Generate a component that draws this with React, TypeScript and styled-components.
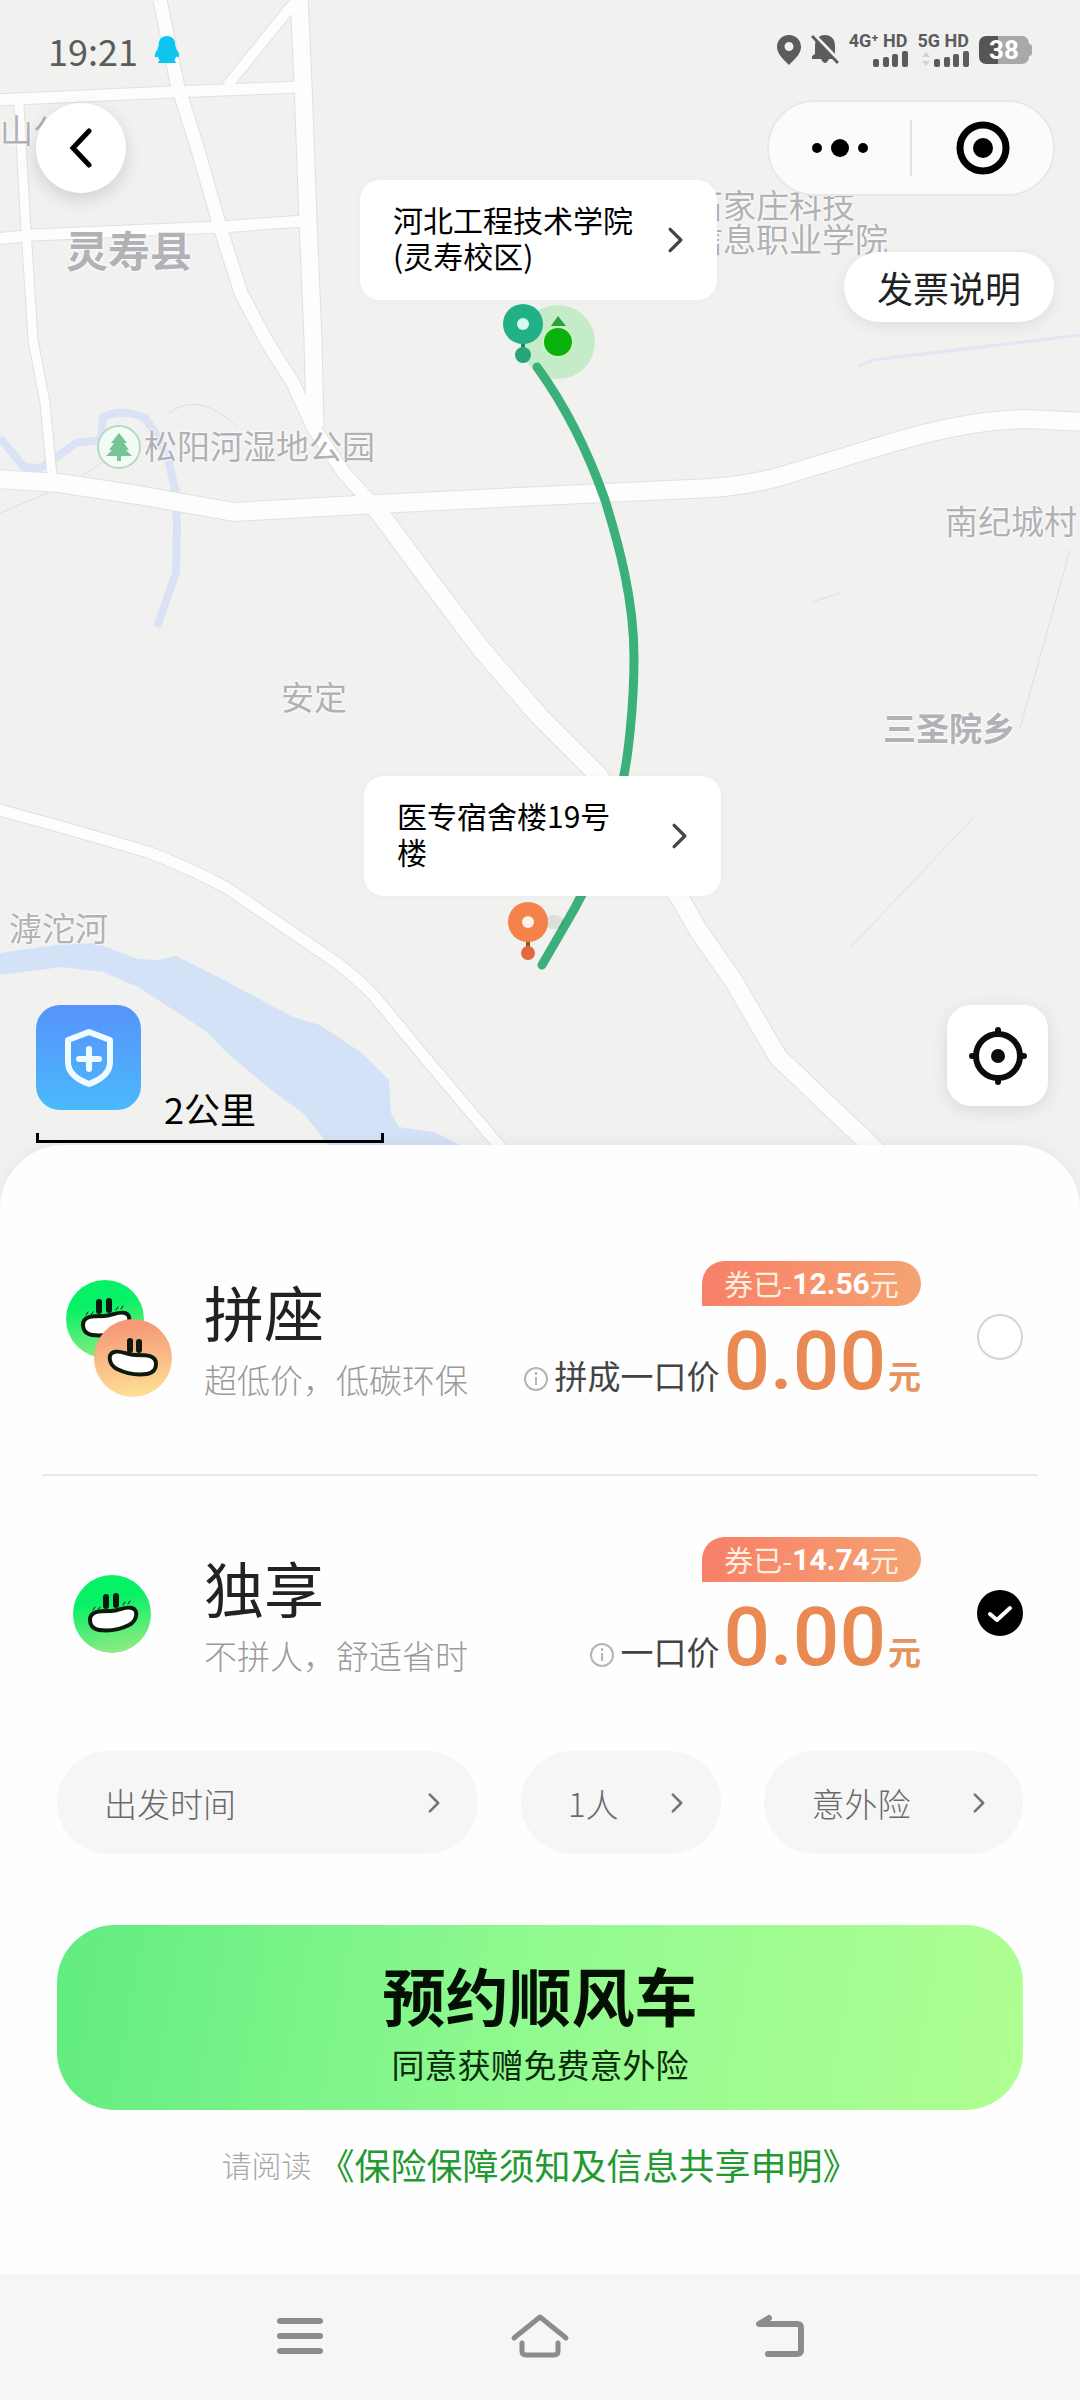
import React, { useState } from "react";
import styled, { createGlobalStyle, css } from "styled-components";

const sans = `"Noto Sans CJK SC", "Noto Sans", sans-serif`;
const digits = `"Roboto", sans-serif`;

const GlobalStyle = createGlobalStyle`
  *, *::before, *::after { box-sizing: border-box; }
  body { margin: 0; background: #f6f6f6; font-family: ${sans}; color: #222; }
  button { font: inherit; color: inherit; border: 0; padding: 0; cursor: pointer; }
  svg { display: block; }
`;

const Page = styled.div`
  display: flex;
  flex-direction: column;
  min-height: 100vh;
  overflow: hidden;
`;

/* ---------- map ---------- */

const MapArea = styled.section`
  position: relative;
  display: flex;
  flex-direction: column;
  height: 1210px;
  background: #f1f1f0;
`;

const MapCanvas = styled.svg`
  position: absolute;
  top: 0;
  left: 0;
`;

const MapLabel = styled.span<{ $x: number; $y: number; $kind?: "county" | "town" }>`
  position: absolute;
  left: ${(p) => p.$x}px;
  top: ${(p) => p.$y}px;
  font-size: 33px;
  line-height: 34px;
  white-space: pre;
  color: #b1b1b6;
  text-shadow: 0 0 3px #fff, 0 0 3px #fff;
  ${(p) => p.$kind === "town" && css`font-weight: 700;`}
  ${(p) => p.$kind === "county" && css`font-size: 42px; line-height: 44px; font-weight: 700;`}
`;

const PlaceCard = styled.button<{ $x: number; $y: number }>`
  position: absolute;
  left: ${(p) => p.$x}px;
  top: ${(p) => p.$y}px;
  display: flex;
  align-items: center;
  justify-content: space-between;
  width: 357px;
  height: 120px;
  padding: 0 34px 0 33px;
  border-radius: 20px;
  background: #fff;
  box-shadow: 0 0 8px rgba(0, 0, 0, 0.03);
  text-align: left;
`;

const PlaceName = styled.span`
  width: 240px;
  padding-bottom: 6px;
  font-size: 30px;
  line-height: 36px;
  color: #000;
`;

const StatusBar = styled.header`
  position: relative;
  display: flex;
  align-items: center;
  justify-content: space-between;
  height: 100px;
  padding: 0 48px;
  color: #5c5c5c;
`;

const StatusGroup = styled.div<{ $gap: number }>`
  display: flex;
  align-items: center;
  gap: ${(p) => p.$gap}px;
`;

const Clock = styled.time`
  font-size: 36px;
  line-height: 40px;
`;

const Signal = styled.div`
  display: flex;
  flex-direction: column;
  align-items: flex-end;
  gap: 2px;
  font: 700 18px/16px "Roboto", sans-serif;
`;

const Battery = styled.div`
  display: flex;
  align-items: center;
`;

const BatteryBody = styled.div`
  width: 50px;
  height: 28px;
  border-radius: 7px;
  background: linear-gradient(90deg, #555 38%, #a9a9a9 38%);
  color: #fff;
  font: 700 26px/28px "Roboto", sans-serif;
  text-align: center;
`;

const BatteryTip = styled.i`
  width: 3px;
  height: 12px;
  border-radius: 0 3px 3px 0;
  background: #a9a9a9;
`;

const TopBar = styled.nav`
  position: relative;
  display: flex;
  align-items: center;
  justify-content: space-between;
  padding: 0 25px 0 36px;
`;

const BackButton = styled.button`
  display: grid;
  place-items: center;
  width: 90px;
  height: 90px;
  border-radius: 50%;
  background: #fff;
  box-shadow: 0 6px 18px rgba(0, 0, 0, 0.14);
`;

const Capsule = styled.div`
  display: flex;
  align-items: center;
  width: 288px;
  height: 96px;
  border: 2px solid #e8e8e8;
  border-radius: 48px;
  background: #fbfbfb;
`;

const CapsuleButton = styled.button`
  display: grid;
  place-items: center;
  flex: 1;
  height: 56px;
  background: none;
  & + & { border-left: 2px solid #e0e0e0; }
`;

const InvoiceButton = styled.button`
  position: relative;
  align-self: flex-end;
  width: 210px;
  height: 70px;
  margin: 56px 26px 0 0;
  border-radius: 35px;
  background: #fff;
  box-shadow: 0 4px 16px rgba(0, 0, 0, 0.08);
  font-size: 36px;
  line-height: 70px;
`;

const MapFooter = styled.div`
  position: relative;
  display: flex;
  align-items: flex-start;
  justify-content: space-between;
  margin-top: auto;
  padding: 0 32px 67px 36px;
`;

const ToolButton = styled.button<{ $accent?: boolean }>`
  display: grid;
  place-items: center;
  width: ${(p) => (p.$accent ? 105 : 101)}px;
  height: ${(p) => (p.$accent ? 105 : 101)}px;
  border-radius: 24px;
  background: ${(p) => (p.$accent ? "linear-gradient(#5693fb, #4bb9fc)" : "#fff")};
  box-shadow: ${(p) => (p.$accent ? "none" : "0 4px 18px rgba(0, 0, 0, 0.1)")};
`;

const Scale = styled.div`
  width: 348px;
  margin-top: -20px;
  font-size: 36px;
  line-height: 36px;
  text-align: center;
  color: #000;
  &::after {
    content: "";
    display: block;
    height: 10px;
    margin-top: 7px;
    border: solid #000;
    border-width: 0 3px 3px;
  }
`;

/* ---------- order sheet ---------- */

const Sheet = styled.main`
  position: relative;
  display: flex;
  flex-direction: column;
  flex: 1;
  margin-top: -65px;
  padding-top: 54px;
  border-radius: 64px 64px 0 0;
  background: #fefefe;
  box-shadow: 0 -4px 18px rgba(0, 0, 0, 0.04);
`;

const Option = styled.label`
  display: flex;
  align-items: center;
  height: 276px;
  padding: 0 57px;
  cursor: pointer;
`;

const Avatar = styled.svg`
  flex: none;
  margin-right: 26px;
`;

const OptionText = styled.div`
  flex: 1;
  padding-top: 2px;
`;

const OptionTitle = styled.div`
  font-size: 60px;
  line-height: 68px;
  color: #222;
`;

const OptionNote = styled.div`
  margin-top: 14px;
  font-size: 33px;
  line-height: 40px;
  font-weight: 300;
  color: #9a9a9a;
`;

const PriceColumn = styled.div`
  display: flex;
  flex-direction: column;
  align-items: flex-end;
  margin-right: 56px;
  padding-bottom: 8px;
`;

const Coupon = styled.div`
  display: flex;
  align-items: center;
  justify-content: center;
  width: 219px;
  height: 45px;
  border-radius: 23px 23px 23px 0;
  background: linear-gradient(100deg, #f87f68, #f5a472);
  color: #ffeedd;
  font-size: 29px;
  line-height: 45px;
`;

const CouponAmount = styled.b`
  font: 700 30px/45px ${digits};
  color: #fff;
`;

const PriceLine = styled.div`
  display: flex;
  align-items: baseline;
  height: 88px;
  margin-top: 11px;
  line-height: 88px;
`;

const InfoMark = styled.span`
  align-self: center;
  padding-top: 36px;
`;

const PriceLabel = styled.span`
  margin: 0 4px 0 6px;
  font-size: 33px;
  color: #444;
`;

const Price = styled.strong`
  font: 500 82px/88px ${digits};
  color: #e98a52;
`;

const PriceUnit = styled.span`
  margin-left: 2px;
  font-size: 33px;
  font-weight: 700;
  color: #e5935f;
`;

const Radio = styled.span`
  position: relative;
  display: grid;
  flex: none;
  width: 46px;
  height: 46px;
  & > * { grid-area: 1 / 1; }
`;

const RadioInput = styled.input`
  appearance: none;
  width: 46px;
  height: 46px;
  margin: 0;
  border: 2px solid #d4d4d4;
  border-radius: 50%;
  background: #fff;
  &:checked { border-color: #000; background: #000; }
`;

const RadioTick = styled.svg`
  position: relative;
  pointer-events: none;
`;

const Divider = styled.hr`
  height: 2px;
  margin: -1px 42px;
  border: 0;
  background: #e8e8e8;
`;

const Filters = styled.div`
  display: grid;
  grid-template-columns: 420fr 200fr 258fr;
  gap: 43px;
  padding: 0 57px;
`;

const FilterButton = styled.button`
  display: flex;
  align-items: center;
  justify-content: space-between;
  height: 103px;
  padding: 0 38px 0 47px;
  border-radius: 52px;
  background: #f6f6f6;
  font-size: 33px;
  font-weight: 300;
  color: #6a6a6a;
`;

const BookButton = styled.button`
  display: flex;
  flex-direction: column;
  align-items: center;
  gap: 14px;
  margin: 71px 57px 0;
  padding: 33px 0 26px;
  border-radius: 58px;
  background: linear-gradient(100deg, #61ec80, #92fa90 50%, #b0ff92);
`;

const BookTitle = styled.span`
  font-size: 63px;
  line-height: 72px;
  font-weight: 700;
  color: #041004;
`;

const BookNote = styled.span`
  font-size: 33px;
  line-height: 40px;
  color: #0a2c0c;
`;

const Terms = styled.p`
  display: flex;
  align-items: center;
  justify-content: center;
  gap: 7px;
  margin: 30px 0 32px;
  font-size: 30px;
  line-height: 48px;
  font-weight: 300;
  color: #a8a8a8;
`;

const TermsLink = styled.a`
  font-size: 36px;
  font-weight: 400;
  color: #229a30;
  text-decoration: none;
`;

const SystemNav = styled.nav`
  position: relative;
  display: flex;
  justify-content: center;
  gap: 180px;
  height: 126px;
  padding-bottom: 2px;
  background: #f6f6f6;
`;

const SystemButton = styled.button`
  display: grid;
  place-items: center;
  width: 60px;
  background: none;
`;

/* ---------- drawings ---------- */

const roads: { d: string; w: number }[] = [
  { d: "M160 0 L177 83 L198 150 L220 227 L241 293 L267 342 L293 383 L313 427 L344 473 L375 507", w: 13 },
  { d: "M370 500 L427 577 L482 650 L540 717 L598 775 L681 900 L698 930 L733 980 L778 1057 L826 1103 L880 1154", w: 18 },
  { d: "M299 -4 L303 83 L308 220 L313 340 L315 427", w: 17 },
  { d: "M-4 100 L172 92 L300 87", w: 11 },
  { d: "M227 86 L294 3", w: 10 },
  { d: "M19 104 L26 230 L33 340 L45 403 L52 476", w: 9 },
  { d: "M-4 239 L34 235 L220 227 L303 221", w: 11 },
  { d: "M-4 479 L59 483 L138 495 L234 512 L358 505 L540 496 L712 488 Q760 484 795 472 L881 446 Q964 420 1025 419 L1084 422", w: 18 },
  { d: "M-4 809 L65 828 L148 852 Q190 868 227 888 L337 963 Q357 978 375 997 L427 1060 L506 1154", w: 11 },
];

const Bean = "M-21 8C-21-1-12-1 0-1C8-1 14-6 21-4C28-2 26 9 18 13C8 18-4 19-12 18C-19 17-21 12-21 8Z";

function MapDrawing() {
  return (
    <MapCanvas width="1080" height="1210" viewBox="0 0 1080 1210" fill="none" aria-hidden="true">
      <path
        d="M0 953L62 944L96 943L138 959L158 960L176 956L220 978L293 1017L320 1025L362 1053L389 1080L391 1113L399 1127L434 1132L470 1150H333L303 1113L275 1093L227 1053L207 1032L169 1007L138 987L103 972L62 967L0 975Z"
        fill="#d4e2f8"
      />
      <path d="M0 438L24 467L41 468L76 443L101 440L103 417Q124 408 145 418L158 437L169 463L176 493L177 527L176 573L157 627" stroke="#dbe2f6" strokeWidth="8" />
      <path d="M858 367L872 360L1040 340L1080 335" stroke="#e0e6f3" strokeWidth="3" />
      <path d="M1070 550L1020 728M974 817L850 948" stroke="#dcdeea" strokeWidth="1" />
      <path d="M812 602L840 593M169 413Q200 390 238 428M0 513L48 493M83 475L103 462" stroke="#dedee2" strokeWidth="1" />
      {roads.map((r) => (
        <path key={r.d} d={r.d} stroke="#e0e0e1" strokeWidth={r.w + 2} strokeLinejoin="round" />
      ))}
      {roads.map((r) => (
        <path key={r.d} d={r.d} stroke="#fdfdfd" strokeWidth={r.w} strokeLinejoin="round" />
      ))}
      <circle cx="119" cy="447" r="21" fill="#f2fcf5" stroke="#b5d9c4" strokeWidth="2" />
      <path d="M119 433L127 443H124L129 450H126L132 456H121V461H117V456H106L112 450H109L114 443H111Z" fill="#75c598" />

      <circle cx="558" cy="342" r="37" fill="#c5ecc8" />
      <path d="M551 326L558 316L566 326Z" fill="#2ea03c" />
      <circle cx="558" cy="342" r="15" fill="#09b30b" stroke="#c9f5c4" strokeWidth="2" />
      <path
        d="M537 367C561 400 585 443 605 500C619 545 634 600 634 657C634 707 628 755 624 775C614 830 592 880 564 927L542 965"
        stroke="#3bb07a"
        strokeWidth="9"
        strokeLinecap="round"
      />
      <path d="M523 340V355" stroke="#1b8d68" strokeWidth="4" />
      <circle cx="523" cy="324" r="20" fill="#22b087" />
      <circle cx="523" cy="324" r="6" fill="#d6fbee" />
      <circle cx="523" cy="355" r="8" fill="#25a57c" />
      <ellipse cx="554" cy="922" rx="10" ry="7" fill="#000" opacity=".08" />
      <path d="M528 940V953" stroke="#9c4d22" strokeWidth="4" />
      <circle cx="528" cy="922" r="20" fill="#f5824b" />
      <circle cx="528" cy="922" r="6" fill="#fff2e4" />
      <circle cx="528" cy="953" r="7" fill="#e3683b" />
    </MapCanvas>
  );
}

function Chevron({ size, color = "#444" }: { size: number; color?: string }) {
  return (
    <svg width={size / 2 + 2} height={size} viewBox="0 0 14 24" fill="none" stroke={color} strokeWidth="3" strokeLinecap="round" strokeLinejoin="round">
      <path d="M2 2L12 12L2 22" />
    </svg>
  );
}

function Bars({ data }: { data?: boolean }) {
  return (
    <svg width="48" height="16" viewBox="0 0 48 16" fill="#5c5c5c">
      {data && <path d="M1 6L5 1L9 6ZM1 10L5 15L9 10Z" fill="#d2d2d2" />}
      <rect x="13" y="8" width="6" height="8" rx="2" />
      <rect x="23" y="6" width="6" height="10" rx="2" />
      <rect x="32" y="3" width="6" height="13" rx="2" />
      <rect x="42" y="0" width="6" height="16" rx="2" />
    </svg>
  );
}

function Face({ x, y, warm }: { x: number; y: number; warm?: boolean }) {
  return (
    <g transform={`translate(${x} ${y})`} strokeLinecap="round">
      <circle r="39" fill={warm ? "url(#warm)" : "url(#fresh)"} />
      <g transform={warm ? "translate(2 -2) scale(-1 1)" : "translate(-1 -2)"} stroke="#0b1a0c">
        <path d={warm ? "M-4-14V-6M5-15V-6" : "M-5-15V-6M5-16V-7"} strokeWidth="6" />
        <path d={Bean} fill="#fff" strokeWidth="4" />
        {!warm && <path d="M-18-2L-16-5M-13-2L-11-5M12-7L14-10M17-8L19-11" strokeWidth="1" />}
      </g>
    </g>
  );
}

function Faces({ pair }: { pair?: boolean }) {
  return (
    <Avatar width="121" height="120" viewBox="0 0 121 120" aria-hidden="true">
      <defs>
        <linearGradient id="fresh" x1=".4" y1="0" x2=".6" y2="1">
          <stop offset=".3" stopColor="#06f165" />
          <stop offset="1" stopColor="#93ea84" />
        </linearGradient>
        <linearGradient id="warm" x1=".4" y1="0" x2=".5" y2="1">
          <stop offset=".1" stopColor="#f69a78" />
          <stop offset="1" stopColor="#fee094" />
        </linearGradient>
      </defs>
      {pair ? (
        <>
          <Face x={48} y={42} />
          <Face x={76} y={81} warm />
        </>
      ) : (
        <Face x={55} y={61} />
      )}
    </Avatar>
  );
}

function InfoIcon() {
  return (
    <svg width="24" height="24" viewBox="0 0 24 24" fill="none" stroke="#b5b5b5" strokeWidth="2">
      <circle cx="12" cy="12" r="11" />
      <path d="M12 10V18M12 5V8" />
    </svg>
  );
}

/* ---------- page ---------- */

const mapLabels: { text: string; x: number; y: number; kind?: "county" | "town" }[] = [
  { text: "山公", x: 0, y: 112 },
  { text: "灵寿县", x: 66, y: 227, kind: "county" },
  { text: "石家庄科技\n信息职业学院", x: 690, y: 187 },
  { text: "松阳河湿地公园", x: 144, y: 428 },
  { text: "南纪城村", x: 945, y: 503 },
  { text: "安定", x: 281, y: 679 },
  { text: "三圣院乡", x: 883, y: 710, kind: "town" },
  { text: "滹沱河", x: 9, y: 910 },
];

const options = [
  { id: "share", title: "拼座", note: "超低价，低碳环保", coupon: "12.56", label: "拼成一口价", price: "0.00" },
  { id: "solo", title: "独享", note: "不拼人，舒适省时", coupon: "14.74", label: "一口价", price: "0.00" },
];

export default function App() {
  const [selected, setSelected] = useState("solo");
  return (
    <Page>
      <GlobalStyle />
      <MapArea>
        <MapDrawing />
        {mapLabels.map((l) => (
          <MapLabel key={l.text} $x={l.x} $y={l.y} $kind={l.kind}>{l.text}</MapLabel>
        ))}
        <PlaceCard $x={360} $y={180}>
          <PlaceName>河北工程技术学院(灵寿校区)</PlaceName>
          <Chevron size={26} />
        </PlaceCard>
        <PlaceCard $x={364} $y={776}>
          <PlaceName>医专宿舍楼19号楼</PlaceName>
          <Chevron size={26} />
        </PlaceCard>

        <StatusBar>
          <StatusGroup $gap={16}>
            <Clock>19:21</Clock>
            <svg width="26" height="30" viewBox="0 0 28 30" fill="#10c4f0">
              <path d="M14 0C20 0 23 4 23 10L24 14C27 18 28 22 26 23L24 22L22 26L24 29H4L6 26L4 22L2 23C0 22 1 18 4 14L5 10C5 4 8 0 14 0Z" />
            </svg>
          </StatusGroup>
          <StatusGroup $gap={10}>
            <svg width="24" height="30" viewBox="0 0 24 30" fill="#5c5c5c">
              <path fillRule="evenodd" d="M12 0C19 0 24 5 24 12C24 19 17 25 12 30C7 25 0 19 0 12C0 5 5 0 12 0ZM12 7A4 4 0 1 0 12 16A4 4 0 1 0 12 7Z" />
            </svg>
            <svg width="28" height="32" viewBox="0 0 28 32">
              <path d="M14 1C21 1 24 6 24 12V20L27 25H18Q14 33 10 25H1V22L4 20V12C4 6 7 1 14 1Z" fill="#5c5c5c" />
              <path d="M3 1L29 28" stroke="#f1f1f0" strokeWidth="4" />
              <path d="M1 2L27 29" stroke="#5c5c5c" strokeWidth="3" />
            </svg>
            <Signal>
              <span>4G⁺ HD</span>
              <Bars />
            </Signal>
            <Signal>
              <span>5G HD</span>
              <Bars data />
            </Signal>
            <Battery>
              <BatteryBody>38</BatteryBody>
              <BatteryTip />
            </Battery>
          </StatusGroup>
        </StatusBar>

        <TopBar>
          <BackButton aria-label="返回">
            <svg width="24" height="40" viewBox="0 0 24 40" fill="none" stroke="#000" strokeWidth="5" strokeLinecap="round">
              <path d="M20 3L4 20L20 37" />
            </svg>
          </BackButton>
          <Capsule>
            <CapsuleButton aria-label="更多">
              <svg width="58" height="20" viewBox="0 0 58 20">
                <circle cx="6" cy="10" r="5" />
                <circle cx="29" cy="10" r="9" />
                <circle cx="52" cy="10" r="5" />
              </svg>
            </CapsuleButton>
            <CapsuleButton aria-label="关闭">
              <svg width="54" height="54" viewBox="0 0 54 54">
                <circle cx="27" cy="27" r="23" fill="none" stroke="#000" strokeWidth="7" />
                <circle cx="27" cy="27" r="10" />
              </svg>
            </CapsuleButton>
          </Capsule>
        </TopBar>
        <InvoiceButton>发票说明</InvoiceButton>

        <MapFooter>
          <div>
            <ToolButton $accent aria-label="安全中心">
              <svg width="50" height="60" viewBox="0 0 50 60" fill="none" stroke="#effcff" strokeWidth="6" strokeLinejoin="round" strokeLinecap="round">
                <path d="M25 4L46 12V34C46 46 36 52 25 56C14 52 4 46 4 34V12Z" />
                <path d="M25 21V41M15 31H35" />
              </svg>
            </ToolButton>
            <Scale>2公里</Scale>
          </div>
          <ToolButton aria-label="定位">
            <svg width="60" height="60" viewBox="0 0 60 60" fill="none" stroke="#0c0c0c" strokeWidth="6" strokeLinecap="round">
              <circle cx="30" cy="30" r="22" />
              <path d="M30 4V8M30 52V56M4 30H8M52 30H56" />
              <circle cx="30" cy="30" r="7" fill="#0c0c0c" stroke="none" />
            </svg>
          </ToolButton>
        </MapFooter>
      </MapArea>

      <Sheet>
        {options.map((o, i) => (
          <React.Fragment key={o.id}>
            {i > 0 && <Divider />}
            <Option htmlFor={o.id}>
              <Faces pair={o.id === "share"} />
              <OptionText>
                <OptionTitle>{o.title}</OptionTitle>
                <OptionNote>{o.note}</OptionNote>
              </OptionText>
              <PriceColumn>
                <Coupon>
                  券已-<CouponAmount>{o.coupon}</CouponAmount>元
                </Coupon>
                <PriceLine>
                  <InfoMark><InfoIcon /></InfoMark>
                  <PriceLabel>{o.label}</PriceLabel>
                  <Price>{o.price}</Price>
                  <PriceUnit>元</PriceUnit>
                </PriceLine>
              </PriceColumn>
              <Radio>
                <RadioInput id={o.id} type="radio" name="ride" checked={selected === o.id} onChange={() => setSelected(o.id)} />
                {selected === o.id && (
                  <RadioTick width="46" height="46" viewBox="0 0 46 46" fill="none" stroke="#fff" strokeWidth="4" strokeLinecap="round" strokeLinejoin="round">
                    <path d="M13 24L20 30L33 18" />
                  </RadioTick>
                )}
              </Radio>
            </Option>
          </React.Fragment>
        ))}

        <Filters>
          {["出发时间", "1人", "意外险"].map((text) => (
            <FilterButton key={text}>
              {text}
              <Chevron size={20} color="#747474" />
            </FilterButton>
          ))}
        </Filters>

        <BookButton>
          <BookTitle>预约顺风车</BookTitle>
          <BookNote>同意获赠免费意外险</BookNote>
        </BookButton>
        <Terms>
          请阅读
          <TermsLink href="#terms">《保险保障须知及信息共享申明》</TermsLink>
        </Terms>
      </Sheet>

      <SystemNav>
        <SystemButton aria-label="最近任务">
          <svg width="46" height="36" viewBox="0 0 46 36" stroke="#8c8c8c" strokeWidth="6" strokeLinecap="round">
            <path d="M3 3H43M3 18H43M3 33H43" />
          </svg>
        </SystemButton>
        <SystemButton aria-label="主屏幕">
          <svg width="60" height="46" viewBox="0 0 60 46" fill="none" stroke="#8c8c8c" strokeWidth="5" strokeLinecap="round" strokeLinejoin="round">
            <path d="M4 25L30 4L56 25M12 30V38Q12 42 16 42H44Q48 42 48 38V30" />
          </svg>
        </SystemButton>
        <SystemButton aria-label="返回上一级">
          <svg width="50" height="46" viewBox="0 0 50 46" fill="none" stroke="#8c8c8c" strokeWidth="6" strokeLinecap="round" strokeLinejoin="round">
            <path d="M14 5L4 11H42Q46 11 46 15V37Q46 41 42 41H13" />
          </svg>
        </SystemButton>
      </SystemNav>
    </Page>
  );
}
